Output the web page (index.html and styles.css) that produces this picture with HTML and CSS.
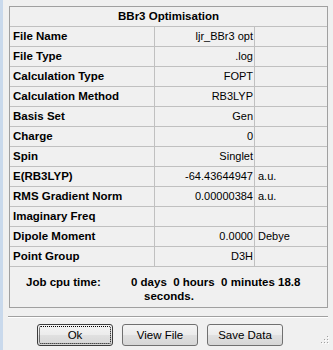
FILE: index.html
```html
<!DOCTYPE html>
<html>
<head>
<meta charset="utf-8">
<link rel="stylesheet" href="styles.css">
</head>
<body>
<div class="window">
  <div class="panel">
    <div class="grid">
      <div class="hdr">BBr3 Optimisation</div>
      <div class="lbl">File Name</div><div class="val">ljr_BBr3 opt</div><div class="unit"></div>
      <div class="lbl">File Type</div><div class="val">.log</div><div class="unit"></div>
      <div class="lbl">Calculation Type</div><div class="val">FOPT</div><div class="unit"></div>
      <div class="lbl">Calculation Method</div><div class="val">RB3LYP</div><div class="unit"></div>
      <div class="lbl">Basis Set</div><div class="val">Gen</div><div class="unit"></div>
      <div class="lbl">Charge</div><div class="val">0</div><div class="unit"></div>
      <div class="lbl">Spin</div><div class="val">Singlet</div><div class="unit"></div>
      <div class="lbl">E(RB3LYP)</div><div class="val">-64.43644947</div><div class="unit">a.u.</div>
      <div class="lbl">RMS Gradient Norm</div><div class="val">0.00000384</div><div class="unit">a.u.</div>
      <div class="lbl">Imaginary Freq</div><div class="val"></div><div class="unit"></div>
      <div class="lbl">Dipole Moment</div><div class="val">0.0000</div><div class="unit">Debye</div>
      <div class="lbl">Point Group</div><div class="val">D3H</div><div class="unit"></div>
      <div class="job">
        <span class="job-label">Job cpu time:</span>
        <span class="job-val">0 days  0 hours  0 minutes 18.8<br><span class="indent">seconds.</span></span>
      </div>
    </div>
  </div>
  <div class="sep"></div>
  <div class="buttons">
    <button class="btn btn-default"><span class="focus">Ok</span></button>
    <button class="btn">View File</button>
    <button class="btn">Save Data</button>
  </div>
  <svg class="grip" width="8" height="8" viewBox="0 0 8 8">
    <rect x="6" y="0" width="1" height="1" fill="#a0a0a0"/>
    <rect x="3" y="3" width="1" height="1" fill="#a0a0a0"/>
    <rect x="6" y="3" width="1" height="1" fill="#a0a0a0"/>
    <rect x="0" y="6" width="1" height="1" fill="#a0a0a0"/>
    <rect x="3" y="6" width="1" height="1" fill="#a0a0a0"/>
    <rect x="6" y="6" width="1" height="1" fill="#a0a0a0"/>
    <rect x="7" y="1" width="1" height="1" fill="#ffffff"/>
    <rect x="4" y="4" width="1" height="1" fill="#ffffff"/>
    <rect x="7" y="4" width="1" height="1" fill="#ffffff"/>
    <rect x="1" y="7" width="1" height="1" fill="#ffffff"/>
    <rect x="4" y="7" width="1" height="1" fill="#ffffff"/>
    <rect x="7" y="7" width="1" height="1" fill="#ffffff"/>
  </svg>
</div>
</body>
</html>
```
FILE: styles.css
```css
html, body {
  margin: 0;
  padding: 0;
  background: #f0f0f0;
}
.window {
  position: relative;
  width: 330px;
  height: 350px;
  border-left: 3px solid #c9d9ec;
  background: #f0f0f0;
  font-family: "Liberation Sans", Arial, sans-serif;
  color: #000;
}
.panel {
  padding: 6px 0 0 6px;
}
.grid {
  display: grid;
  grid-template-columns: 145px 100px 72px;
  grid-auto-rows: 20px;
  width: 319px;
  box-sizing: border-box;
  border: 1px solid #a0a0a0;
}
.hdr {
  grid-column: 1 / 4;
  text-align: center;
  font-weight: bold;
  font-size: 11.5px;
  line-height: 19px;
  border-bottom: 1px solid #c0c0c0;
}
.lbl, .val, .unit {
  border-bottom: 1px solid #c0c0c0;
  line-height: 19px;
  white-space: nowrap;
  overflow: hidden;
}
.lbl {
  font-weight: bold;
  font-size: 11.5px;
  padding-left: 3px;
  border-right: 1px solid #c0c0c0;
}
.val {
  font-size: 11px;
  text-align: right;
  padding-right: 1px;
  border-right: 1px solid #c0c0c0;
}
.unit {
  font-size: 11px;
  padding-left: 3px;
}
.job {
  grid-column: 1 / 4;
  grid-row: span 2;
  display: flex;
  padding: 8px 0 0 16px;
  font-weight: bold;
  font-size: 11.5px;
  line-height: 14px;
}
.job-label {
  width: 105px;
  flex: none;
}
.job-val {
  white-space: pre;
}
.indent {
  padding-left: 13px;
}
.sep {
  margin: 8px 0 0 5px;
  width: 320px;
  border-top: 1px solid #a0a0a0;
  border-bottom: 1px solid #ffffff;
  height: 0;
}
.buttons {
  display: flex;
  gap: 9px;
  padding: 6px 0 0 34px;
}
.btn {
  width: 76px;
  height: 22px;
  margin: 0;
  padding: 0;
  border: 1px solid #707070;
  border-radius: 3px;
  background: linear-gradient(#f4f4f4 0%, #ececec 48%, #e0e0e0 52%, #d6d6d6 100%);
  font-family: "Liberation Sans", Arial, sans-serif;
  font-size: 11.5px;
  color: #000;
  position: relative;
}
.btn-default {
  border-color: #3c3c3c;
}
.btn-default .focus {
  position: absolute;
  left: 1px;
  top: 1px;
  right: 1px;
  bottom: 1px;
  border: 1px dotted #000;
  display: flex;
  align-items: center;
  justify-content: center;
  border-radius: 2px;
}
.grip {
  position: absolute;
  right: 4px;
  bottom: 6px;
}
```
